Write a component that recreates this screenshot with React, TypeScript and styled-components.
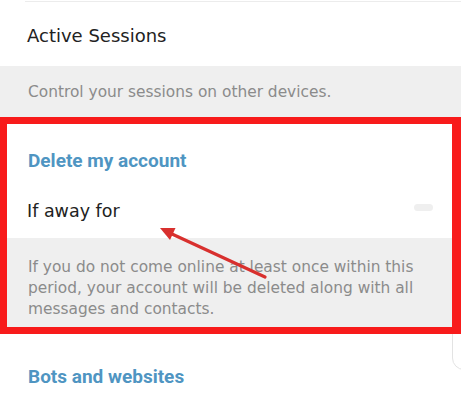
import { createGlobalStyle, styled } from 'styled-components';

const GlobalStyle = createGlobalStyle`
  body {
    margin: 0;
    background: #ffffff;
  }
`;

const App: React.FC = () => {
  return (
    <>
      <GlobalStyle />
      <Screen>
        <TopDivider />

        <SettingRow $height={64} $paddingTop={22}>
          <RowLabel $size={18}>Active Sessions</RowLabel>
        </SettingRow>

        <InfoBlock $paddingTop={16} $paddingBottom={21}>
          Control your sessions on other devices.
        </InfoBlock>

        <SectionHeader $paddingTop={25}>Delete my account</SectionHeader>

        <SettingRow $height={65} $paddingTop={26}>
          <RowLabel $size={17.5}>If away for</RowLabel>
          <ValuePill />
        </SettingRow>

        <InfoBlock $paddingTop={19} $paddingBottom={11}>
          If you do not come online at least once within this period, your
          account will be deleted along with all messages and contacts.
        </InfoBlock>

        <SectionHeader $paddingTop={34}>Bots and websites</SectionHeader>

        <EdgePanel />
        <Highlight />
        <Arrow viewBox="0 0 461 412">
          <line
            x1="265"
            y1="277"
            x2="172"
            y2="234"
            stroke="#d8302e"
            strokeWidth="3.2"
            strokeLinecap="round"
          />
          <polygon points="160,228 175.5,228 170,240" fill="#d8302e" />
        </Arrow>
      </Screen>
    </>
  );
};

const Screen = styled.main`
  position: relative;
  width: 461px;
  height: 412px;
  overflow: hidden;
  background: #ffffff;
  display: flex;
  flex-direction: column;
`;

const TopDivider = styled.div`
  margin: 1px 0 0 25px;
  height: 1px;
  background: #ececec;
`;

const SettingRow = styled.div<{ $height: number; $paddingTop: number }>`
  box-sizing: border-box;
  height: ${({ $height }) => $height}px;
  padding: ${({ $paddingTop }) => $paddingTop}px 28px 0 27px;
  display: flex;
  align-items: flex-start;
  justify-content: space-between;
  background: #ffffff;
`;

const RowLabel = styled.span<{ $size: number }>`
  font-family: 'DejaVu Sans', sans-serif;
  font-size: ${({ $size }) => $size}px;
  line-height: 24px;
  color: #222222;
`;

const ValuePill = styled.span`
  margin-top: 5px;
  width: 19px;
  height: 7px;
  border-radius: 4px;
  background: #efefef;
`;

const InfoBlock = styled.p<{ $paddingTop: number; $paddingBottom: number }>`
  margin: 0;
  padding: ${({ $paddingTop, $paddingBottom }) =>
    `${$paddingTop}px 30px ${$paddingBottom}px 28px`};
  background: #efefef;
  font-family: 'DejaVu Sans', sans-serif;
  font-size: 15.4px;
  line-height: 21px;
  color: #8b8b8b;
`;

const SectionHeader = styled.h3<{ $paddingTop: number }>`
  margin: 0;
  padding: ${({ $paddingTop }) => $paddingTop}px 28px 0;
  font-family: Roboto, 'Liberation Sans', sans-serif;
  font-weight: 700;
  font-size: 19px;
  line-height: 24px;
  color: #4f95c2;
  background: #ffffff;
`;

const EdgePanel = styled.div`
  position: absolute;
  left: 452px;
  top: 290px;
  width: 30px;
  height: 80px;
  box-sizing: border-box;
  border: 1px solid #e3e3e3;
  border-bottom-left-radius: 12px;
`;

const Highlight = styled.div`
  position: absolute;
  left: 0;
  top: 117px;
  width: 461px;
  height: 217px;
  box-sizing: border-box;
  border-style: solid;
  border-color: #f81b1b;
  border-width: 7px 9px 7px 7px;
  pointer-events: none;
`;

const Arrow = styled.svg`
  position: absolute;
  inset: 0;
  width: 461px;
  height: 412px;
  pointer-events: none;
`;

export default App;
